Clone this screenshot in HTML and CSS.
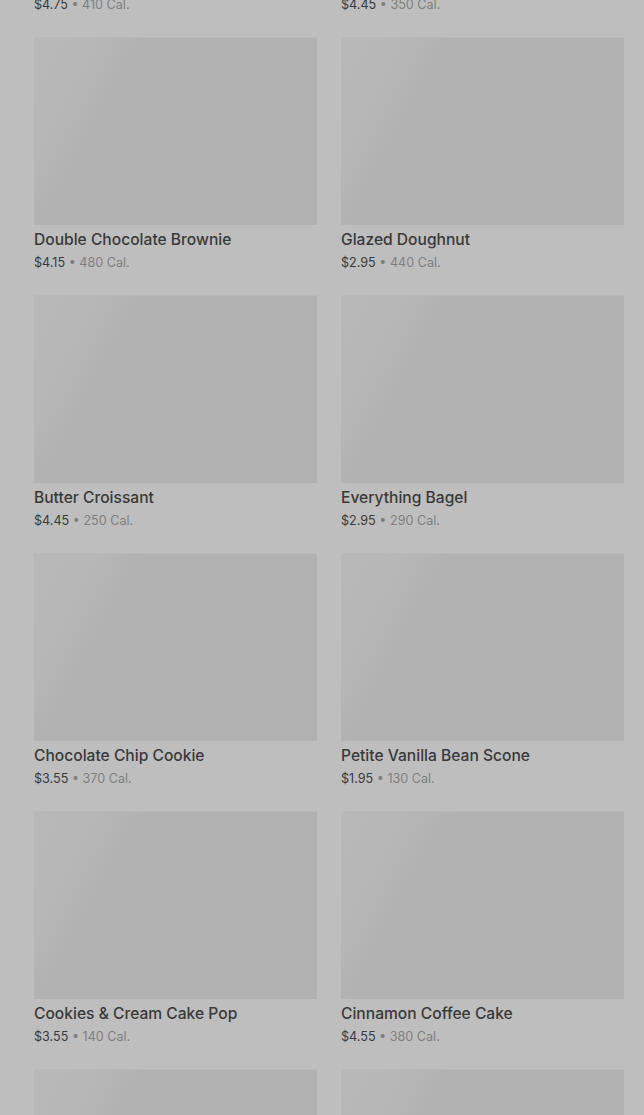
FILE: index.html
```html
<!DOCTYPE html>
<html lang="en">
<head>
    <meta charset="UTF-8">
    <meta name="viewport" content="width=device-width, initial-scale=1.0">
    <title>Bakery - Menu</title>
    <link rel="stylesheet" href="styles.css">
</head>
<body>

    <div class="viewport">
        <div class="product-grid">
            <div class="product">
                <div class="product-image"></div>
                <div class="product-name">Iced Lemon Loaf</div>
                <div class="product-meta"><span class="price">$4.75</span> <span class="dot">&bull;</span> <span class="cal">410 Cal.</span></div>
            </div>
            <div class="product">
                <div class="product-image"></div>
                <div class="product-name">Banana Nut Bread</div>
                <div class="product-meta"><span class="price">$4.45</span> <span class="dot">&bull;</span> <span class="cal">350 Cal.</span></div>
            </div>

            <div class="product">
                <div class="product-image"></div>
                <div class="product-name">Double Chocolate Brownie</div>
                <div class="product-meta"><span class="price">$4.15</span> <span class="dot">&bull;</span> <span class="cal">480 Cal.</span></div>
            </div>
            <div class="product">
                <div class="product-image"></div>
                <div class="product-name">Glazed Doughnut</div>
                <div class="product-meta"><span class="price">$2.95</span> <span class="dot">&bull;</span> <span class="cal">440 Cal.</span></div>
            </div>

            <div class="product">
                <div class="product-image"></div>
                <div class="product-name">Butter Croissant</div>
                <div class="product-meta"><span class="price">$4.45</span> <span class="dot">&bull;</span> <span class="cal">250 Cal.</span></div>
            </div>
            <div class="product">
                <div class="product-image"></div>
                <div class="product-name">Everything Bagel</div>
                <div class="product-meta"><span class="price">$2.95</span> <span class="dot">&bull;</span> <span class="cal">290 Cal.</span></div>
            </div>

            <div class="product">
                <div class="product-image"></div>
                <div class="product-name">Chocolate Chip Cookie</div>
                <div class="product-meta"><span class="price">$3.55</span> <span class="dot">&bull;</span> <span class="cal">370 Cal.</span></div>
            </div>
            <div class="product">
                <div class="product-image"></div>
                <div class="product-name">Petite Vanilla Bean Scone</div>
                <div class="product-meta"><span class="price">$1.95</span> <span class="dot">&bull;</span> <span class="cal">130 Cal.</span></div>
            </div>

            <div class="product">
                <div class="product-image"></div>
                <div class="product-name">Cookies &amp; Cream Cake Pop</div>
                <div class="product-meta"><span class="price">$3.55</span> <span class="dot">&bull;</span> <span class="cal">140 Cal.</span></div>
            </div>
            <div class="product">
                <div class="product-image"></div>
                <div class="product-name">Cinnamon Coffee Cake</div>
                <div class="product-meta"><span class="price">$4.55</span> <span class="dot">&bull;</span> <span class="cal">380 Cal.</span></div>
            </div>

            <div class="product">
                <div class="product-image"></div>
                <div class="product-name">Birthday Cake Pop</div>
                <div class="product-meta"><span class="price">$3.55</span> <span class="dot">&bull;</span> <span class="cal">160 Cal.</span></div>
            </div>
            <div class="product">
                <div class="product-image"></div>
                <div class="product-name">Pumpkin Cream Cheese Muffin</div>
                <div class="product-meta"><span class="price">$3.95</span> <span class="dot">&bull;</span> <span class="cal">350 Cal.</span></div>
            </div>
        </div>
    </div>

</body>
</html>
```

FILE: styles.css
```css
html, body {
    height: 100%;
}

body {
    font-family: 'Inter', 'Liberation Sans', sans-serif;
    background-color: #bebebe;
    margin: 0;
    padding: 0;
    overflow: hidden;
}

/* page is scrolled down part way, first row is cut off */
.viewport {
    height: 100%;
    overflow: hidden;
}

.product-grid {
    display: grid;
    grid-template-columns: 283px 283px;
    column-gap: 24px;
    row-gap: 23px;
    padding-left: 34px;
    margin-top: -221px;
}

.product-image {
    height: 188px;
    background: linear-gradient(118deg, #b8b8b8 0%, #b7b7b7 16%, #b1b1b1 30%, #b1b1b1 100%);
    border-top: 1px solid #b9b9b9;
    box-sizing: border-box;
}

.product-name {
    margin-top: 5px;
    font-size: 15.6px;
    line-height: 20px;
    font-weight: 500;
    color: #393939;
}

.product-meta {
    margin-top: 4px;
    font-size: 12.6px;
    line-height: 18px;
    color: #7e7e7e;
}

.product-meta .price {
    color: #3a3a3a;
}
```
